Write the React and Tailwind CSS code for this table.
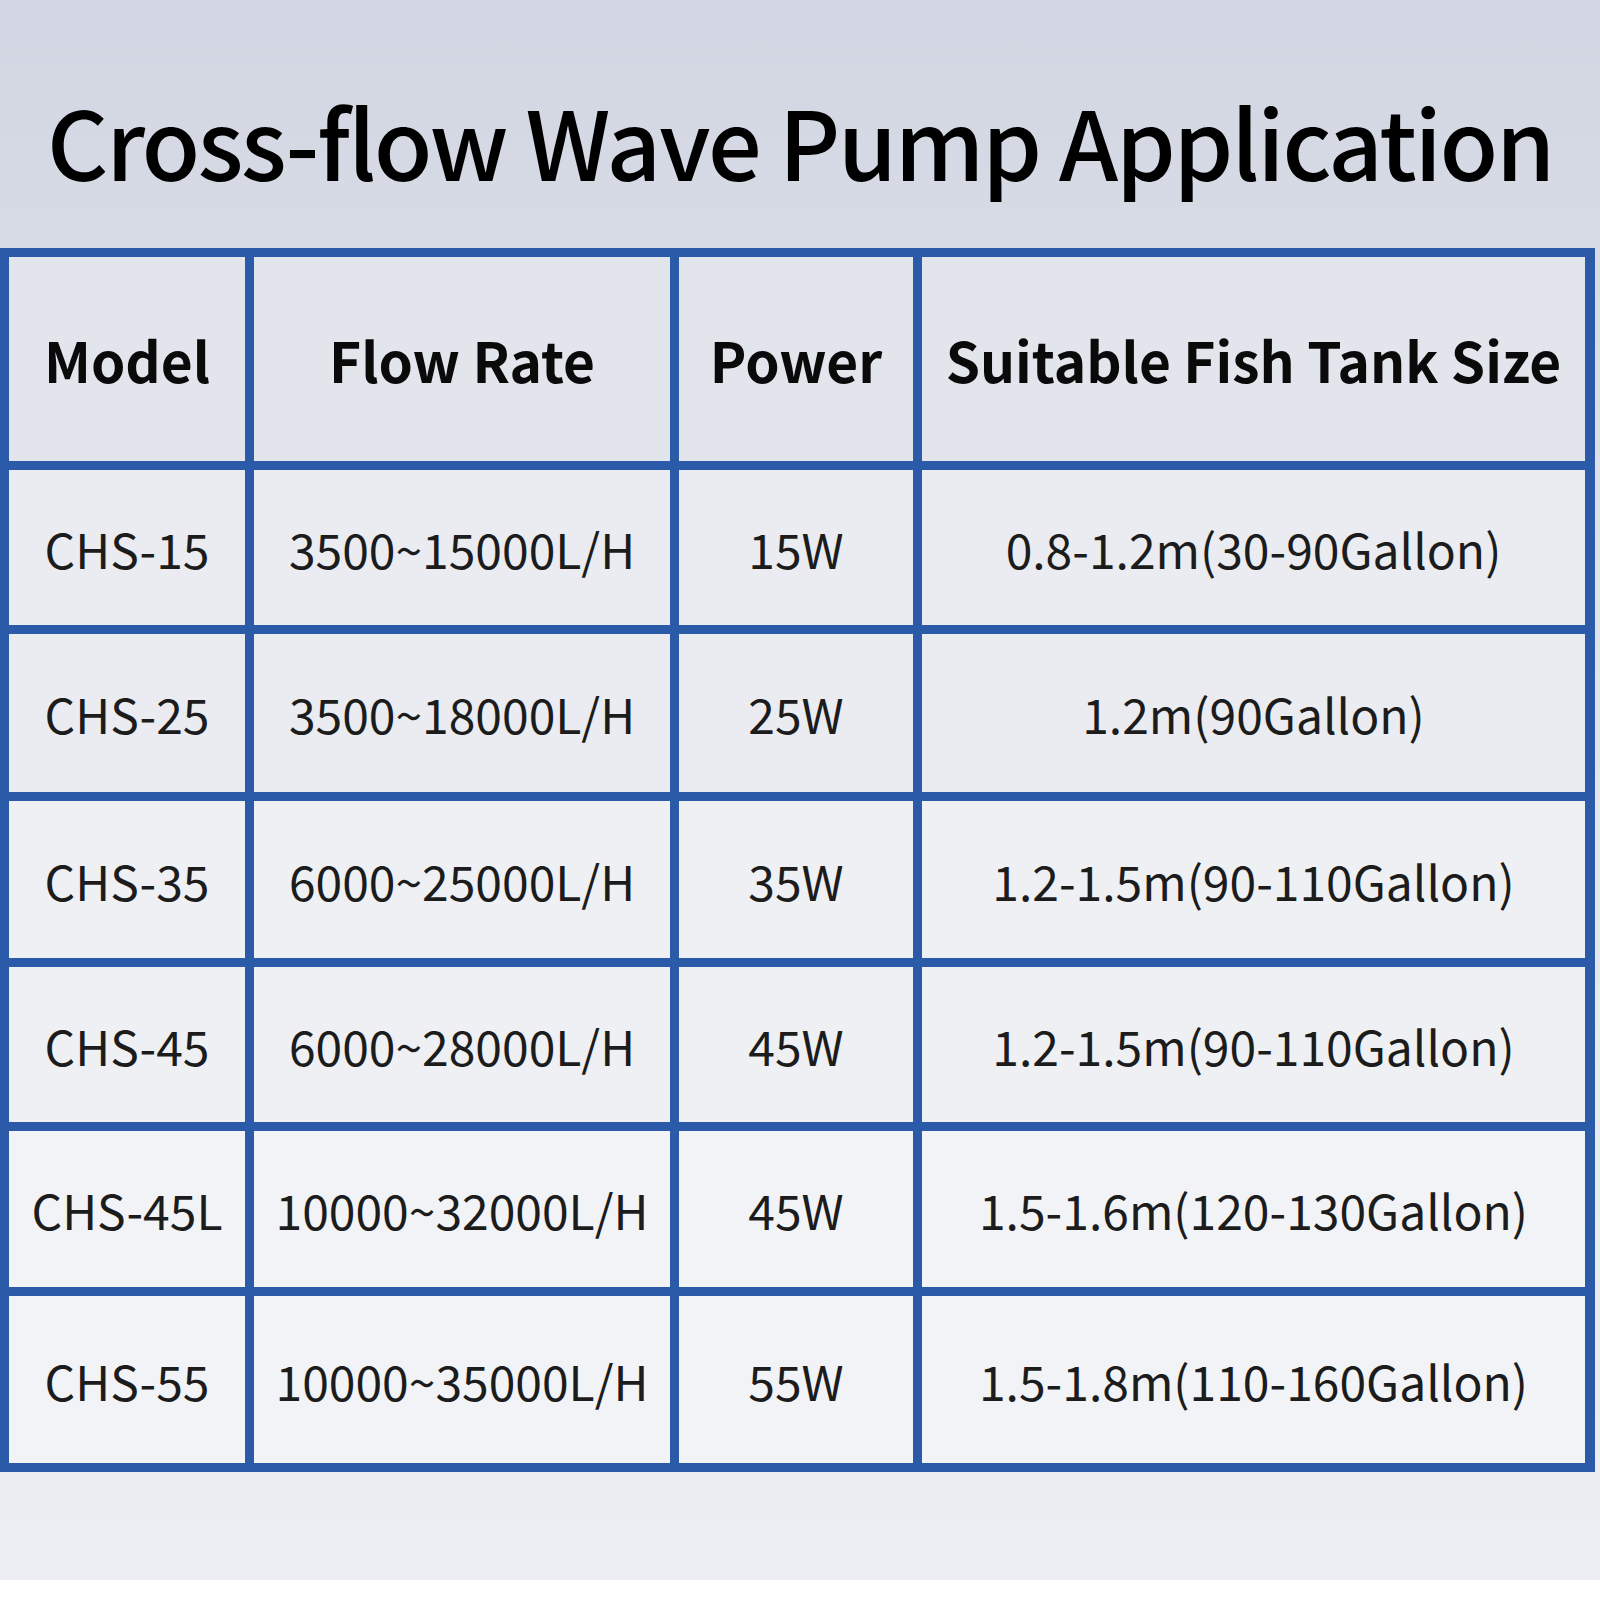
import React from "react";

const rows = [
  ["CHS-15", "3500~15000L/H", "15W", "0.8-1.2m(30-90Gallon)"],
  ["CHS-25", "3500~18000L/H", "25W", "1.2m(90Gallon)"],
  ["CHS-35", "6000~25000L/H", "35W", "1.2-1.5m(90-110Gallon)"],
  ["CHS-45", "6000~28000L/H", "45W", "1.2-1.5m(90-110Gallon)"],
  ["CHS-45L", "10000~32000L/H", "45W", "1.5-1.6m(120-130Gallon)"],
  ["CHS-55", "10000~35000L/H", "55W", "1.5-1.8m(110-160Gallon)"],
];

const headers = ["Model", "Flow Rate", "Power", "Suitable Fish Tank Size"];

export default function App() {
  return (
    <div
      className="w-[1600px] h-[1600px] bg-white flex flex-col"
      style={{ fontFamily: '"Noto Sans CJK SC", "Noto Sans", sans-serif' }}
    >
      <div className="h-[1580px] bg-gradient-to-b from-[#d2d6e2] via-[#e3e6ee] to-[#eceef3] flex flex-col">
        <div className="h-[248px] flex items-center justify-center pt-[30px]">
          <h1 className="text-[95px] font-medium text-black leading-none tracking-[-2.2px] whitespace-nowrap">
            Cross-flow Wave Pump Application
          </h1>
        </div>
        <div className="w-[1595px] bg-[#2b5aa8] p-[9px] grid grid-cols-[236px_416px_234px_663px] grid-rows-[204px_155px_158px_157px_155px_156px_167px] gap-[9px]">
          {headers.map((h) => (
            <div
              key={h}
              className="bg-[#e3e5ec] flex items-center justify-center text-[55px] font-bold text-[#0a0a0a] whitespace-nowrap"
            >
              {h}
            </div>
          ))}
          {rows.map((r, i) =>
            r.map((c, j) => (
              <div
                key={i + "-" + j}
                className={
                  "flex items-center justify-center text-[48px] text-[#1c1c1c] whitespace-nowrap " +
                  (i < 2 ? "bg-[#eaecf1]" : i < 4 ? "bg-[#eef0f4]" : "bg-[#f2f3f6]")
                }
              >
                {c}
              </div>
            ))
          )}
        </div>
      </div>
    </div>
  );
}
